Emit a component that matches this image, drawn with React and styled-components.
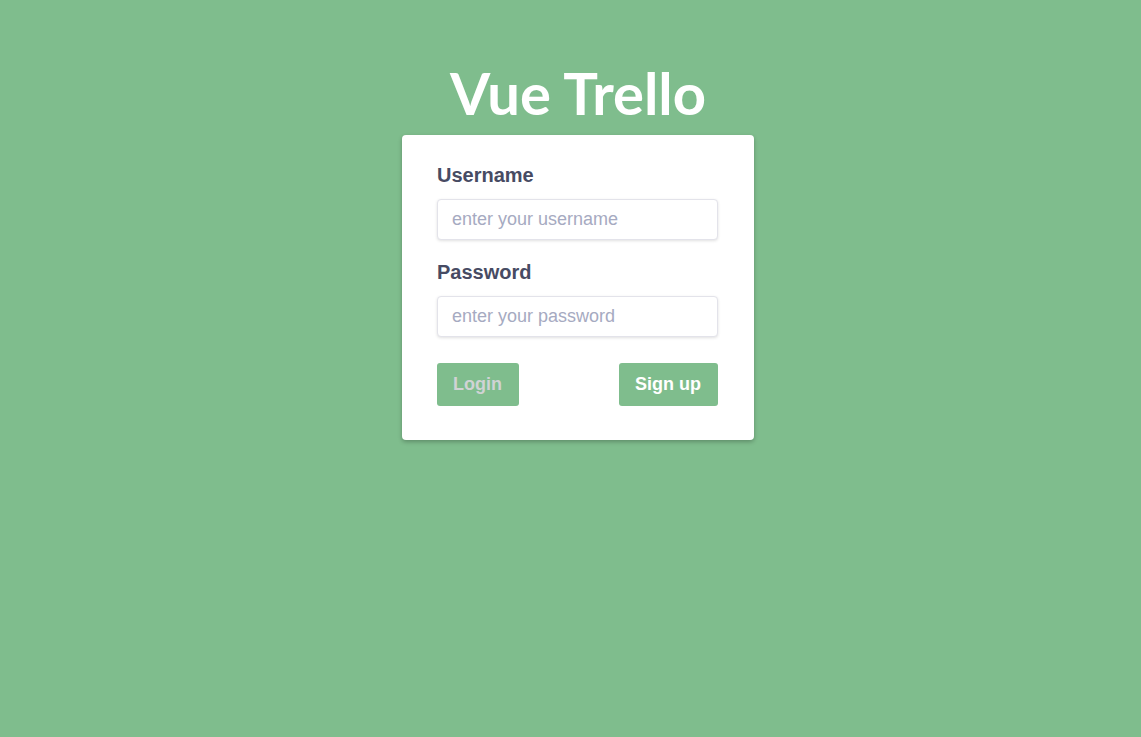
import React from "react";
import styled, { createGlobalStyle } from "styled-components";

const Global = createGlobalStyle`
  html, body { margin: 0; padding: 0; background: #7fbd8d; }
  body { font-family: "Liberation Sans", Arial, sans-serif; }
`;

const Page = styled.div`
  min-height: 737px;
  display: flex;
  flex-direction: column;
  align-items: center;
  padding: 55px 0 0 15px;
  box-sizing: border-box;
`;

const Title = styled.h1`
  margin: 0 0 5px;
  font-family: "Lato", "Open Sans", sans-serif;
  font-weight: 700;
  font-size: 58px;
  line-height: 75px;
  color: #fff;
`;

const Card = styled.form`
  width: 352px;
  box-sizing: border-box;
  background: #fff;
  border-radius: 4px;
  box-shadow: 0 2px 4px rgba(0, 0, 0, 0.25);
  padding: 28px 36px 34px 35px;
  display: flex;
  flex-direction: column;
`;

const Label = styled.label`
  font-size: 20px;
  font-weight: 700;
  color: #474b63;
  line-height: 24px;
  margin-bottom: 12px;
`;

const Input = styled.input`
  height: 41px;
  box-sizing: border-box;
  border: 1px solid #e3e3ea;
  border-radius: 4px;
  box-shadow: 0 1px 3px rgba(0, 0, 0, 0.12);
  padding: 0 14px;
  font-family: "Liberation Sans", Arial, sans-serif;
  font-size: 18px;
  color: #474b63;
  margin-bottom: ${(p) => p.$mb}px;
  outline: none;
  &::placeholder { color: #a6aac1; }
`;

const Buttons = styled.div`
  display: flex;
  justify-content: space-between;
`;

const Button = styled.button`
  height: 43px;
  padding: 0 17px 0 16px;
  border: none;
  border-radius: 3px;
  background: #7fbd8d;
  font-family: "Liberation Sans", Arial, sans-serif;
  font-weight: 700;
  font-size: 18px;
  color: ${(p) => (p.disabled ? "#d0d3d4" : "#fff")};
  cursor: pointer;
`;

export default function App() {
  return (
    <>
      <Global />
      <Page>
        <Title>Vue Trello</Title>
        <Card onSubmit={(e) => e.preventDefault()}>
          <Label>Username</Label>
          <Input $mb={20} placeholder="enter your username" />
          <Label>Password</Label>
          <Input $mb={26} type="password" placeholder="enter your password" />
          <Buttons>
            <Button disabled>Login</Button>
            <Button>Sign up</Button>
          </Buttons>
        </Card>
      </Page>
    </>
  );
}
